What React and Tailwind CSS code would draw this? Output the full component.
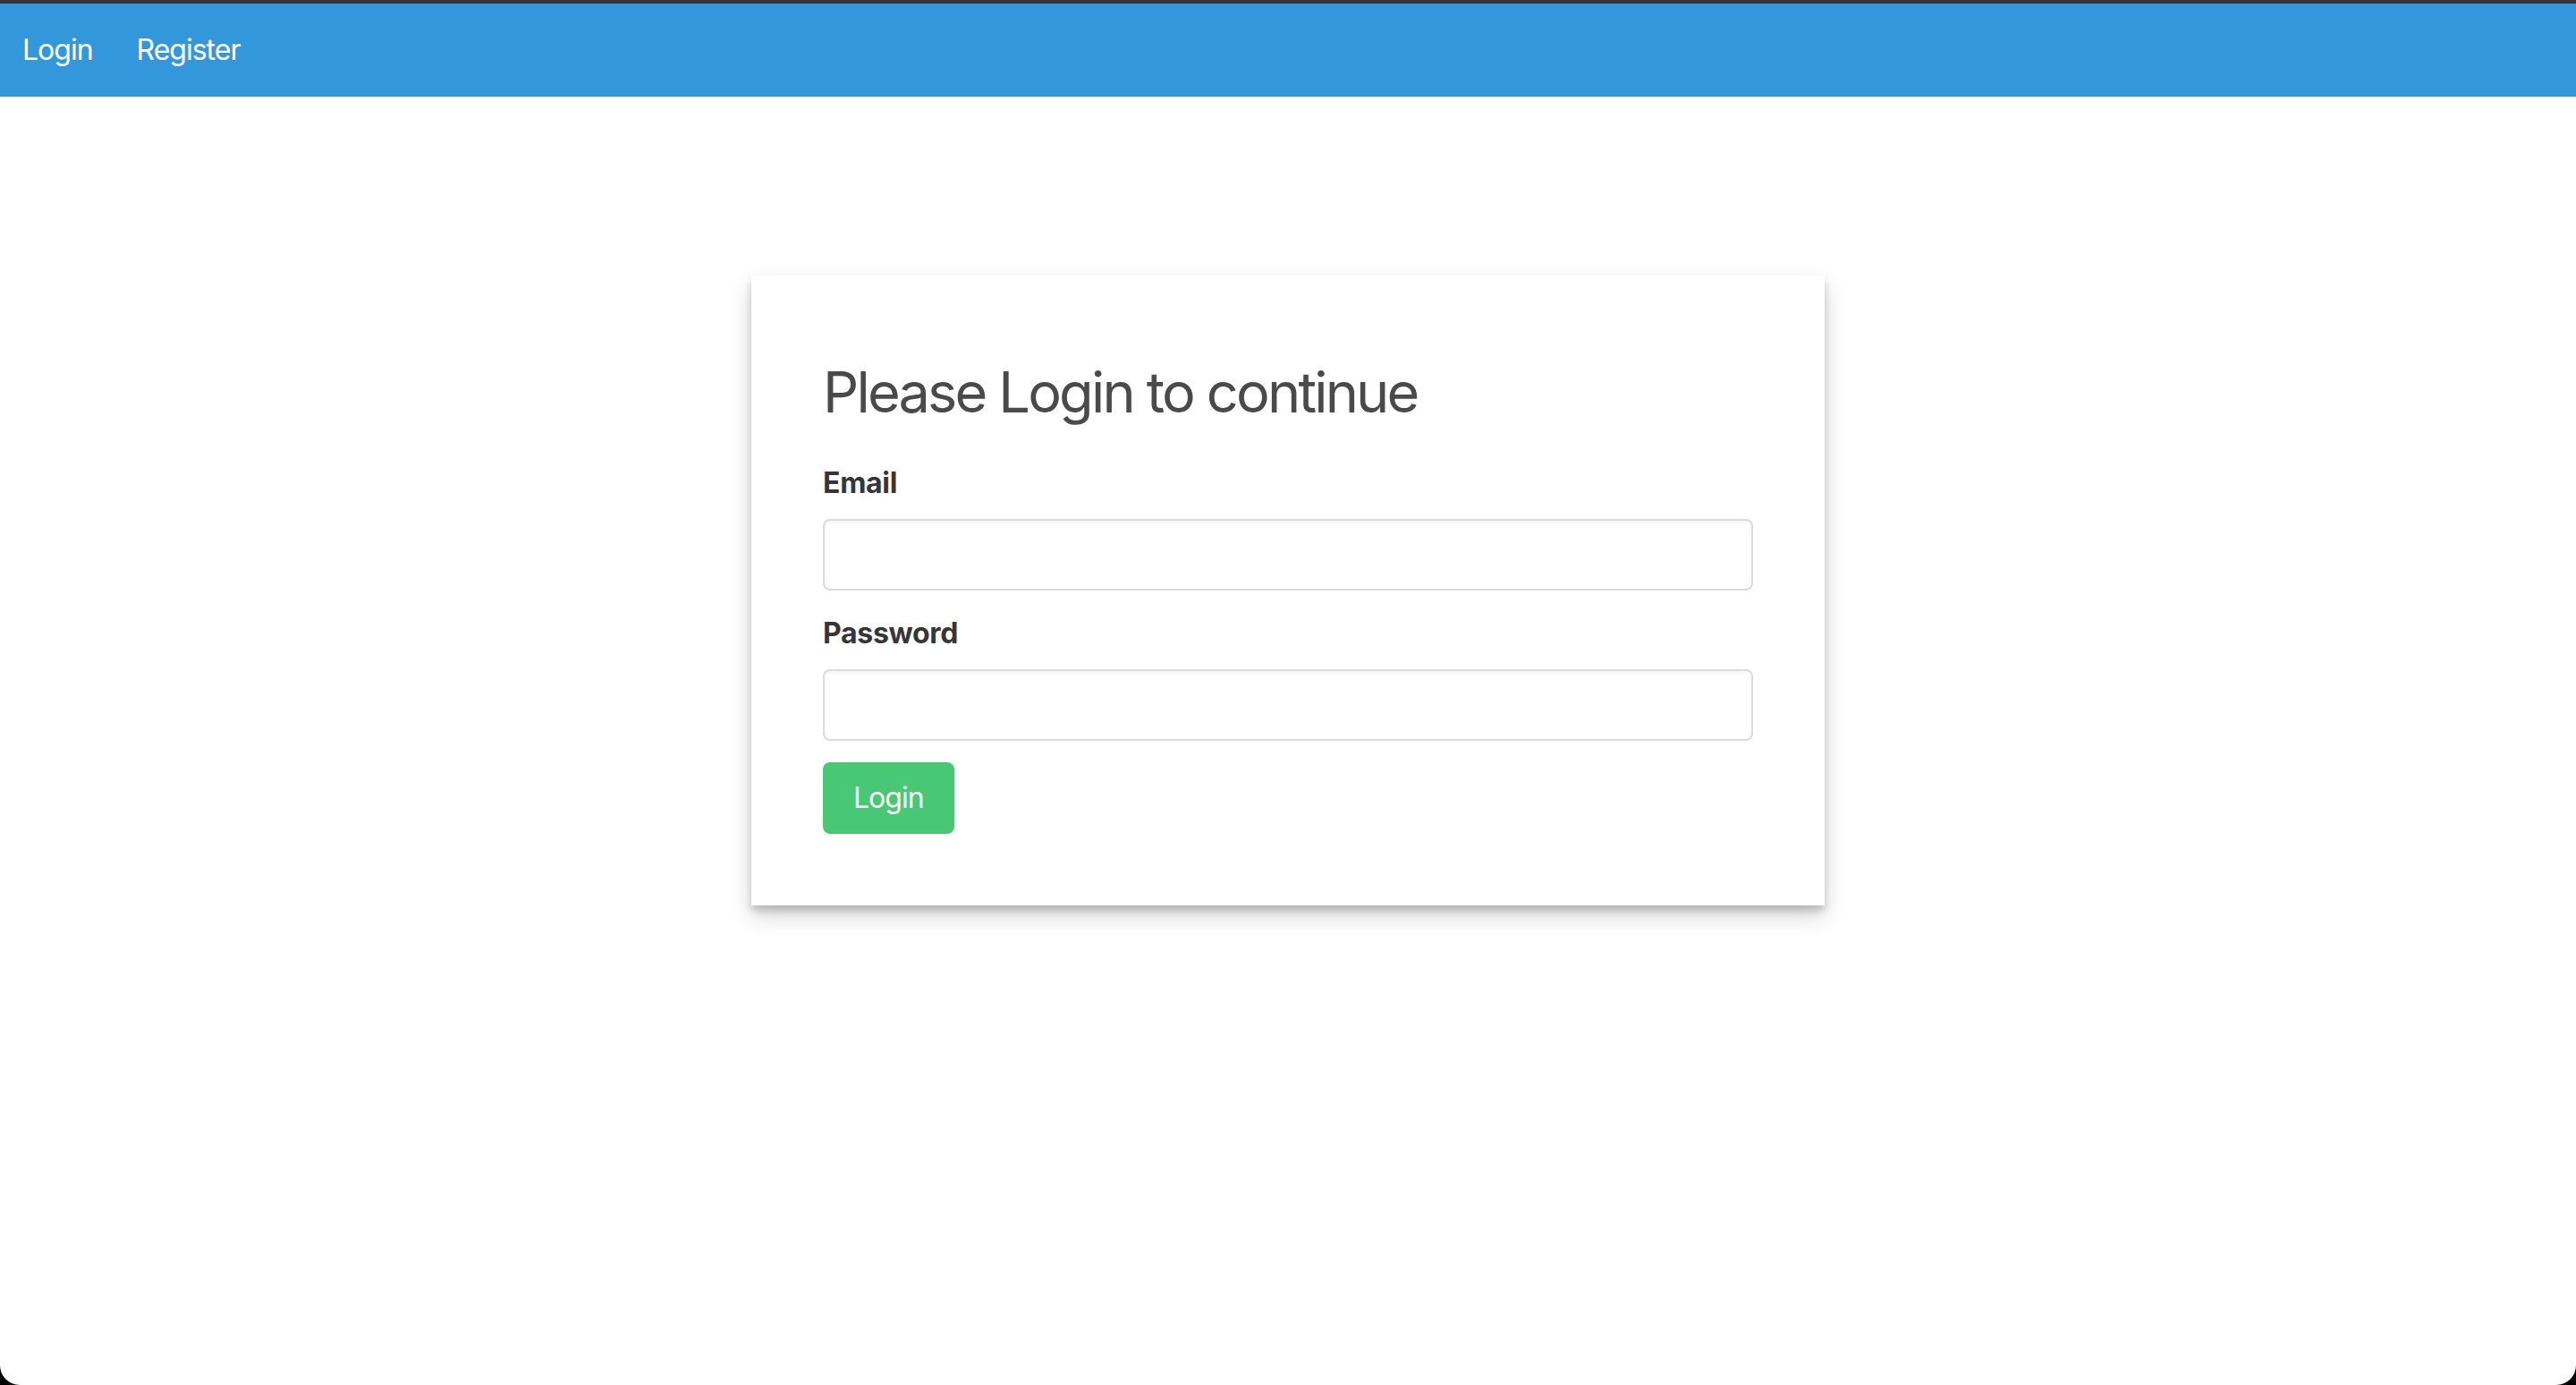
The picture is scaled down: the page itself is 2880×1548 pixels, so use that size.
export default function App() {
  return (
    <div className="w-[2880px] h-[1548px] bg-black" style={{ fontFamily: 'Inter, "Noto Sans", Arial, sans-serif' }}>
      <div className="w-full h-full bg-white rounded-b-[22px] overflow-hidden flex flex-col">
        <div className="h-[4px] bg-[#33353b]" />
        <nav className="h-[104px] bg-[#3398db] flex items-center pl-[25px] gap-[49px] text-white text-[32px] tracking-[-1px]">
          <a className="cursor-pointer">Login</a>
          <a className="cursor-pointer">Register</a>
        </nav>
        <main className="flex justify-center pt-[200px]">
          <div className="w-[1200px] bg-white px-[80px] pt-[94px] pb-[80px] shadow-[0_12px_24px_rgba(0,0,0,0.16),0_6px_8px_rgba(0,0,0,0.18)]">
            <h1 className="text-[63px] leading-[72px] text-[#4a4a4a] font-normal tracking-[-2.8px] mb-[42px]">
              Please Login to continue
            </h1>
            <div className="mb-[24px]">
              <label className="block text-[32px] leading-[48px] font-bold text-[#363636] mb-[16px] tracking-[-0.3px]">Email</label>
              <input type="email" className="block w-full h-[80px] border-2 border-[#dbdbdb] rounded-[8px] bg-white shadow-[inset_0_2px_4px_rgba(10,10,10,0.05)] outline-none px-[22px] text-[32px]" />
            </div>
            <div className="mb-[24px]">
              <label className="block text-[32px] leading-[48px] font-bold text-[#363636] mb-[16px] tracking-[-0.3px]">Password</label>
              <input type="password" className="block w-full h-[80px] border-2 border-[#dbdbdb] rounded-[8px] bg-white shadow-[inset_0_2px_4px_rgba(10,10,10,0.05)] outline-none px-[22px] text-[32px]" />
            </div>
            <button className="h-[80px] px-[34px] rounded-[8px] bg-[#48c774] text-white text-[32px] leading-none tracking-[-1px]">
              Login
            </button>
          </div>
        </main>
      </div>
    </div>
  );
}
